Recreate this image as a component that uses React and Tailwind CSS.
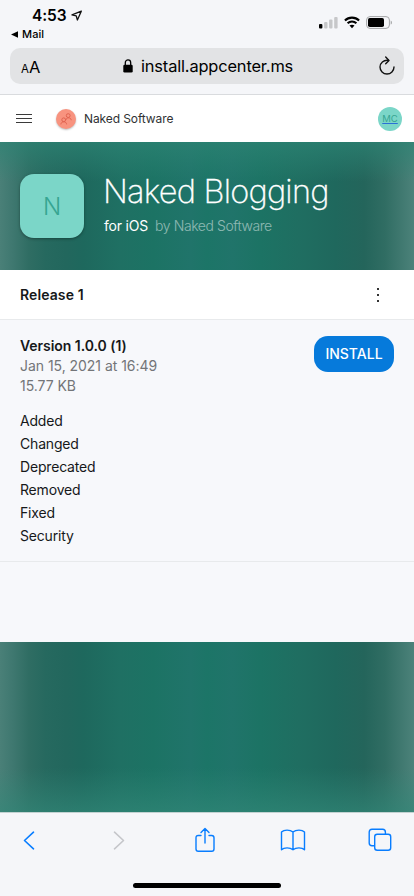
import React from "react";

const releaseNotes = ["Added", "Changed", "Deprecated", "Removed", "Fixed", "Security"];

function StatusBar() {
  return (
    <div className="flex h-12 justify-between">
      <div className="pl-[11px] pt-[6px]">
        <div className="flex h-[19px] items-center pl-[21px]">
          <span className="text-[15.5px] font-semibold leading-[19px] tracking-[-0.1px]">4:53</span>
          <svg className="ml-[5px]" width="12" height="12" viewBox="0 0 12 12" fill="none" stroke="#111" strokeWidth="1.3" strokeLinejoin="round">
            <path d="M10.3 1.2 L1 4.9 L5.2 5.8 L6.4 10 Z" />
          </svg>
        </div>
        <div className="mt-[2px] flex h-[14px] items-center">
          <svg width="7" height="7" viewBox="0 0 7 7"><path d="M0 3.5 L7 0.3 V6.7 Z" /></svg>
          <span className="ml-[4px] text-[11px] font-medium leading-[14px] tracking-[0.1px]">Mail</span>
        </div>
      </div>
      <div className="mt-[16px] flex h-[13px] items-start pr-[21px]">
        <svg width="19" height="13" viewBox="0 0 19 13" fill="#c6c7c9">
          <rect x="0" y="8" width="3.4" height="4.5" rx="1" fill="#000" />
          <rect x="5.1" y="6" width="3.4" height="6.5" rx="1" />
          <rect x="10.1" y="3.5" width="3.4" height="9" rx="1" />
          <rect x="15.2" y="1" width="3.4" height="11.5" rx="1" />
        </svg>
        <svg className="ml-[6px]" width="16" height="13" viewBox="0 0 16 13" fill="none" stroke="#000" strokeWidth="2.1">
          <path d="M0.9 4.5 C4.9 0.6 11.1 0.6 15.1 4.5" />
          <path d="M3.6 7.3 C6.1 4.9 9.9 4.9 12.4 7.3" />
          <path d="M8 12.2 L5.5 9.6 C6.9 8.3 9.1 8.3 10.5 9.6 Z" fill="#000" stroke="none" />
        </svg>
        <svg className="ml-[6px]" width="27" height="13" viewBox="0 0 27 13">
          <rect x="0.6" y="0.6" width="22.8" height="11.8" rx="3.4" fill="none" stroke="#a4a5a7" />
          <rect x="2" y="2" width="16" height="9" rx="1.8" />
          <path d="M24.7 4.4 C26.4 5 26.4 8 24.7 8.6 Z" fill="#a4a5a7" />
        </svg>
      </div>
    </div>
  );
}

function AddressBar() {
  return (
    <div className="mx-[10px] flex h-9 items-center rounded-[10px] bg-[#e2e3e5] pl-[11px] pr-[8px]">
      <div className="flex w-[102px] items-baseline pt-[2px]">
        <span className="text-[11.5px]">A</span>
        <span className="text-[16.5px]">A</span>
      </div>
      <svg width="10" height="14" viewBox="0 0 10 14">
        <rect x="0.3" y="5.8" width="9.4" height="7.8" rx="1.3" />
        <path d="M2.3 6.5 V3.7 C2.3 0 7.7 0 7.7 3.7 V6.5" fill="none" stroke="#000" strokeWidth="1.3" />
      </svg>
      <span className="ml-[8px] flex-1 text-[16.4px] leading-5 tracking-[-0.15px]">install.appcenter.ms</span>
      <svg width="18" height="20" viewBox="0 0 18 20" fill="none" stroke="#111" strokeWidth="1.4" strokeLinecap="round" strokeLinejoin="round">
        <path d="M10.2 4.3 C5.6 3.7 2 7 2 11 A7 7 0 0 0 16 11" />
        <path d="M7.7 1.1 L11 4.4 L7.7 7.7" />
      </svg>
    </div>
  );
}

function SiteHeader() {
  return (
    <div className="flex h-[47px] items-center bg-white pl-4 pr-[12px]">
      <svg width="16" height="11" viewBox="0 0 16 11" stroke="#3a3a3a"><path d="M0 1.5H16M0 5.5H16M0 9.5H16" /></svg>
      <div className="ml-6 flex size-5 items-center justify-center rounded-full bg-[#f8937f] shadow-[0_1px_2px_rgba(0,0,0,0.25)]">
        <svg width="12" height="12" viewBox="0 0 12 12" fill="none" stroke="#dc5f4c" strokeWidth="0.9">
          <circle cx="8.2" cy="2.6" r="1.9" />
          <circle cx="3.7" cy="6.8" r="1.9" />
          <path d="M5.9 7 C6 4.2 11.2 4 11.2 7.2 M0.9 11.4 C1 7.9 6.6 7.9 6.6 11.4" />
        </svg>
      </div>
      <span className="ml-2 flex-1 text-[12px] tracking-[-0.1px] text-[#303234]">Naked Software</span>
      <div className="flex size-6 items-center justify-center rounded-full bg-[#7bd6c8] pt-[2px] text-[9.5px] text-[#36a592] underline decoration-[#2a6fd6] decoration-1 underline-offset-1">MC</div>
    </div>
  );
}

function Hero() {
  return (
    <div className="h-32 bg-[linear-gradient(to_bottom,rgba(45,132,116,0.7),rgba(40,125,110,0)_40px),linear-gradient(to_right,#4a8078_0%,#3f7870_3%,#2f6d63_7%,#26695f_11%,#22675d_16%,#1e685d_20%,#1f7063_29%,#1c7364_37%,#20746a_46%,#1c7567_50%,#20746a_56%,#1c7364_63%,#1f6e61_72%,#1f685d_81%,#24655b_88%,#306d63_93%,#4c827a_100%)]">
      <div className="flex pl-5 pt-8">
        <div className="flex size-16 items-center justify-center rounded-[14px] bg-[#7bd6c8] pt-[2px] text-[24px] font-light text-[#36a592] shadow-[0_1px_3px_rgba(0,0,0,0.35)]">N</div>
        <div className="ml-[19px] text-white">
          <div className="whitespace-nowrap text-[32.5px] font-extralight leading-[35px] tracking-[-0.78px] [-webkit-text-stroke:0.3px_white]">Naked Blogging</div>
          <div className="ml-px mt-[8px] flex text-[14px] leading-[18px]">
            <span className="tracking-[-0.2px]">for iOS</span>
            <span className="ml-[7px] font-light tracking-[-0.42px] text-white/50">by Naked Software</span>
          </div>
        </div>
      </div>
    </div>
  );
}

function Release() {
  return (
    <>
      <div className="flex h-[50px] items-center justify-between border-b border-[#e8eaec] bg-white pl-5 pr-[34px]">
        <span className="text-[14px] font-semibold tracking-[0.1px] text-[#16181a]">Release 1</span>
        <svg width="4" height="16" viewBox="0 0 4 16" fill="#333"><path d="M1 1h2v2H1zM1 7h2v2H1zM1 13h2v2H1z" /></svg>
      </div>
      <div className="h-[242px] border-b border-[#e8eaec] bg-[#f7f8fb] px-5 pt-4">
        <div className="flex justify-between">
          <div className="text-[14px] leading-5 tracking-[-0.04px] text-[#737578]">
            <div className="font-semibold text-[#16181a]">Version 1.0.0 (1)</div>
            <div>Jan 15, 2021 at 16:49</div>
            <div>15.77 KB</div>
          </div>
          <button className="h-9 w-20 rounded-[14px] bg-[#067adb] pb-px text-[14px] font-medium text-white">INSTALL</button>
        </div>
        <div className="mt-[13px] text-[14px] leading-[23px] tracking-[-0.18px] text-[#16181a]">
          {releaseNotes.map((note) => <div key={note}>{note}</div>)}
        </div>
      </div>
      <div className="h-20 bg-[#f7f8fb]" />
    </>
  );
}

function Toolbar() {
  return (
    <div className="h-[84px] border-t border-[#c3d2d2] bg-[#f5f6f9]">
      <div className="flex h-[54px] items-center pl-[23px]">
        <svg width="12" height="19" viewBox="0 0 12 19" fill="none" stroke="#087dff" strokeWidth="1.6" strokeLinecap="round" strokeLinejoin="round"><path d="M10.5 1.2 L1.5 9.5 L10.5 17.8" /></svg>
        <svg className="ml-[78px]" width="12" height="19" viewBox="0 0 12 19" fill="none" stroke="#c5c6ca" strokeWidth="1.6" strokeLinecap="round" strokeLinejoin="round"><path d="M1.5 1.2 L10.5 9.5 L1.5 17.8" /></svg>
        <svg className="ml-[69px]" width="22" height="26" viewBox="0 0 22 26" fill="none" stroke="#087dff" strokeWidth="1.4" strokeLinecap="round" strokeLinejoin="round">
          <path d="M7 8.5 H4.3 Q2 8.5 2 10.8 V22 Q2 24.3 4.3 24.3 H17.7 Q20 24.3 20 22 V10.8 Q20 8.5 17.7 8.5 H15 M11 16 V1.7 M7 5.5 L11 1.5 L15 5.5" />
        </svg>
        <svg className="ml-[64px]" width="26" height="22" viewBox="0 0 26 22" fill="none" stroke="#087dff" strokeWidth="1.4" strokeLinejoin="round">
          <path d="M13 3 C10 .5 4 .5 1.5 3 V20.7 C4 18.3 10 18.3 13 20.7 C16 18.3 22 18.3 24.5 20.7 V3 C22 .5 16 .5 13 3 V20.7" />
        </svg>
        <svg className="ml-[62px]" width="24" height="24" viewBox="0 0 24 24" fill="none" stroke="#087dff" strokeWidth="1.4">
          <rect x="6.7" y="6.3" width="16" height="16" rx="2.5" />
          <path d="M6.7 17.8 H4 Q1.2 17.8 1.2 15 V4.2 Q1.2 1.3 4 1.3 H14.6 Q17.4 1.3 17.4 4.2 V6.3" />
        </svg>
      </div>
      <div className="mx-auto mt-[16px] h-[5px] w-[148px] rounded-full bg-black" />
    </div>
  );
}

export default function App() {
  return (
    <div className="flex h-[896px] w-[414px] flex-col overflow-hidden bg-[#f5f6f9] font-['Inter',sans-serif] text-black">
      <div className="h-[95px] border-b border-[#d9dbde]">
        <StatusBar />
        <AddressBar />
      </div>
      <SiteHeader />
      <Hero />
      <Release />
      <div className="h-[170px] bg-[linear-gradient(to_top,rgba(50,136,120,0.65),rgba(40,125,110,0)_44px),linear-gradient(to_right,#4a8078_0%,#3f7870_3%,#2f6d63_7%,#26695f_11%,#22675d_16%,#1e685d_20%,#1f7063_29%,#1c7364_37%,#20746a_46%,#1c7567_50%,#20746a_56%,#1c7364_63%,#1f6e61_72%,#1f685d_81%,#24655b_88%,#306d63_93%,#4c827a_100%)]" />
      <Toolbar />
    </div>
  );
}
